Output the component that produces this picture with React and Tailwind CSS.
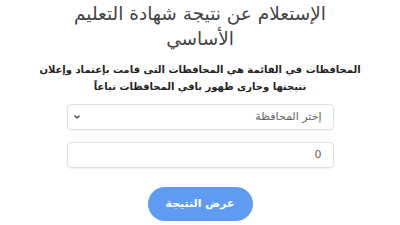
export default function App() {
  return (
    <div
      dir="rtl"
      className="w-[400px] h-[225px] overflow-hidden bg-white flex flex-col items-center text-[#333] font-['DejaVu_Sans',sans-serif]"
    >
      <h1 className="shrink-0 mt-[1px] text-[18.5px] leading-[25px] text-center text-[#444] whitespace-nowrap">
        الإستعلام عن نتيجة شهادة التعليم
        <br />
        الأساسي
      </h1>
      <p className="shrink-0 mt-[10px] text-[10px] leading-[17px] font-bold text-center text-[#222] whitespace-nowrap">
        المحافظات في القائمة هي المحافظات التى قامت بإعتماد وإعلان
        <br />
        نتيجتها وجارى ظهور باقي المحافظات تباعاً
      </p>
      <div className="shrink-0 mt-[9px] w-[267px] flex flex-col gap-3">
        <div className="h-[26px] border border-[#e0e0e0] rounded flex items-center justify-between pr-[11px] pl-[5px] text-[11px] text-[#666] shadow-[0_1px_2px_rgba(0,0,0,0.06)]">
          <span>إختر المحافظة</span>
          <svg width="8" height="6" viewBox="0 0 8 6">
            <path d="M1.5 1.5 L4 4 L6.5 1.5" fill="none" stroke="#444" strokeWidth="1.3" />
          </svg>
        </div>
        <div className="h-[26px] border border-[#e0e0e0] rounded flex items-center pr-[11px] text-[11px] text-[#666] shadow-[0_1px_2px_rgba(0,0,0,0.06)]">
          0
        </div>
      </div>
      <button className="shrink-0 mt-[19px] w-[105px] h-[34px] rounded-full bg-[#5f9bf0] text-white text-[11px] font-bold">
        عرض النتيجة
      </button>
    </div>
  );
}
